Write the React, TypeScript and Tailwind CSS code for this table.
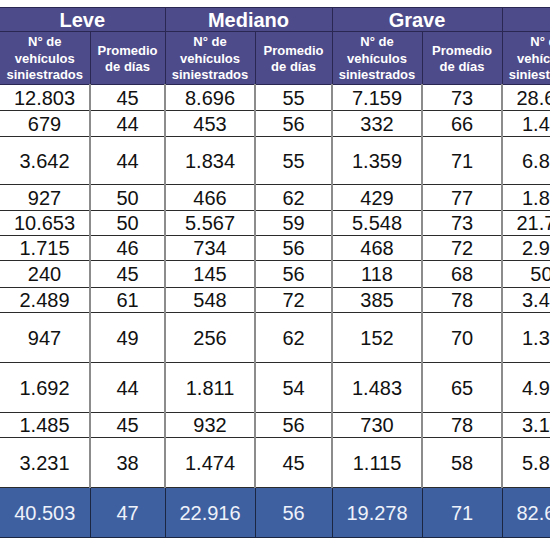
import React from "react";

const rows = [
  { h: "h-[26px]", v: ["12.803", "45", "8.696", "55", "7.159", "73", "28.658", "60"] },
  { h: "h-[26px]", v: ["679", "44", "453", "56", "332", "66", "1.464", "54"] },
  { h: "h-[48px]", v: ["3.642", "44", "1.834", "55", "1.359", "71", "6.835", "52"] },
  { h: "h-[26px]", v: ["927", "50", "466", "62", "429", "77", "1.822", "60"] },
  { h: "h-[25px]", v: ["10.653", "50", "5.567", "59", "5.548", "73", "21.768", "59"] },
  { h: "h-[25px]", v: ["1.715", "46", "734", "56", "468", "72", "2.917", "54"] },
  { h: "h-[27px]", v: ["240", "45", "145", "56", "118", "68", "503", "53"] },
  { h: "h-[25px]", v: ["2.489", "61", "548", "72", "385", "78", "3.422", "65"] },
  { h: "h-[50px]", v: ["947", "49", "256", "62", "152", "70", "1.355", "55"] },
  { h: "h-[50px]", v: ["1.692", "44", "1.811", "54", "1.483", "65", "4.986", "53"] },
  { h: "h-[25px]", v: ["1.485", "45", "932", "56", "730", "78", "3.147", "55"] },
  { h: "h-[50px]", v: ["3.231", "38", "1.474", "45", "1.115", "58", "5.820", "44"] },
];

const total = ["40.503", "47", "22.916", "56", "19.278", "71", "82.697", "56"];

const groups = ["Leve", "Mediano", "Grave", "Total"];

const widths = ["w-[90px]", "w-[75px]", "w-[90px]", "w-[77px]", "w-[90px]", "w-[80px]", "w-[90px]", "w-[80px]"];

export default function App() {
  return (
    <div className="w-[550px] h-[550px] overflow-hidden bg-white pt-[7px] font-['Liberation_Sans',Arial,sans-serif]">
      <table className="table-fixed border-collapse w-[672px]">
        <colgroup>
          {widths.map((w, i) => (
            <col key={i} className={w} />
          ))}
        </colgroup>
        <thead>
          <tr className="h-[24px] bg-[#4e4b8a] text-white">
            {groups.map((g) => (
              <th
                key={g}
                colSpan={2}
                className="border border-[#2a2852] border-l-0 p-0 text-[20px] font-bold leading-none"
              >
                {g}
              </th>
            ))}
          </tr>
          <tr className="h-[53px] bg-[#4e4b8a] text-white">
            {groups.map((g) => (
              <React.Fragment key={g}>
                <th className="border border-[#2a2852] border-l-0 p-0 pt-[2px] text-[13px] font-bold leading-[16.5px]">
                  N° de
                  <br />
                  vehículos
                  <br />
                  siniestrados
                </th>
                <th className="border border-[#2a2852] p-0 pt-[2px] text-[13px] font-bold leading-[16.5px]">
                  Promedio
                  <br />
                  de días
                </th>
              </React.Fragment>
            ))}
          </tr>
        </thead>
        <tbody>
          {rows.map((r, i) => (
            <tr key={i} className={r.h}>
              {r.v.map((c, j) => (
                <td
                  key={j}
                  className={
                    "border-y border-y-[#2b2b2b] border-x-2 border-x-[#8c8c8c] p-0 text-center text-[20px] leading-none text-[#111] " +
                    (j === 0 ? "border-l-0" : "")
                  }
                >
                  {c}
                </td>
              ))}
            </tr>
          ))}
          <tr className="h-[50px] bg-[#3e60a0]">
            {total.map((c, j) => (
              <td
                key={j}
                className={
                  "border border-[#1b2642] p-0 text-center text-[20px] leading-none text-[#eef2fa] " +
                  (j === 0 ? "border-l-0" : "")
                }
              >
                {c}
              </td>
            ))}
          </tr>
        </tbody>
      </table>
    </div>
  );
}
